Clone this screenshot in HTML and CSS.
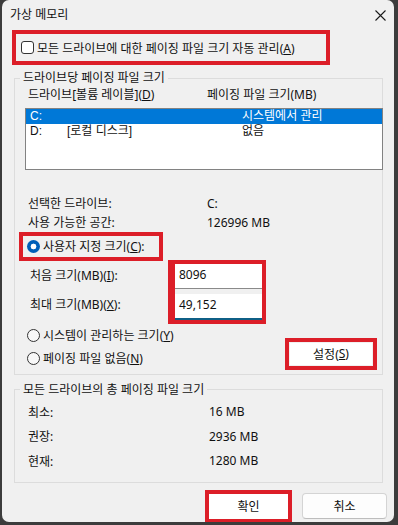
FILE: index.html
```html
<!DOCTYPE html>
<html lang="ko">
<head>
<meta charset="utf-8">
<title>가상 메모리</title>
<link rel="stylesheet" href="styles.css">
</head>
<body>
<div class="window">
  <div class="titlebar">
    <span class="title">가상 메모리</span>
    <svg class="close" width="11" height="11" viewBox="0 0 11 11"><path d="M0.5 0.5 L10.5 10.5 M10.5 0.5 L0.5 10.5" stroke="#1a1a1a" stroke-width="1.1" fill="none"/></svg>
  </div>
  <div class="main">
    <div class="hl hl-auto">
      <span class="check"></span>
      <span>모든 드라이브에 대한 페이징 파일 크기 자동 관리(<u>A</u>)</span>
    </div>

    <fieldset class="group g1">
      <legend>드라이브당 페이징 파일 크기</legend>
      <div class="cols">
        <span>드라이브[볼륨 레이블](<u>D</u>)</span>
        <span>페이징 파일 크기(MB)</span>
      </div>
      <div class="list">
        <div class="row sel"><span>C:</span><span></span><span>시스템에서 관리</span></div>
        <div class="row"><span>D:</span><span>[로컬 디스크]</span><span>없음</span></div>
      </div>
      <div class="info">
        <span>선택한 드라이브:</span><span>C:</span>
        <span>사용 가능한 공간:</span><span>126996 MB</span>
      </div>
      <div class="hl hl-radio">
        <span class="radio on"></span>
        <span>사용자 지정 크기(<u>C</u>):</span>
      </div>
      <div class="sizes">
        <div class="size-labels">
          <span>처음 크기(MB)(<u>I</u>):</span>
          <span class="second">최대 크기(MB)(<u>X</u>):</span>
        </div>
        <div class="hl hl-inputs">
          <div class="field f1">8096</div>
          <div class="field f2">49,152</div>
        </div>
      </div>
      <div class="bottom">
        <div class="radios">
          <div class="opt"><span class="radio"></span><span>시스템이 관리하는 크기(<u>Y</u>)</span></div>
          <div class="opt"><span class="radio"></span><span>페이징 파일 없음(<u>N</u>)</span></div>
        </div>
        <div class="hl hl-set">
          <div class="btn-set">설정(<u>S</u>)</div>
        </div>
      </div>
    </fieldset>

    <fieldset class="group g2">
      <legend>모든 드라이브의 총 페이징 파일 크기</legend>
      <div class="totals">
        <span>최소:</span><span>16 MB</span>
        <span>권장:</span><span>2936 MB</span>
        <span>현재:</span><span>1280 MB</span>
      </div>
    </fieldset>

    <div class="actions">
      <div class="hl hl-ok"><div class="btn-ok">확인</div></div>
      <div class="btn-cancel">취소</div>
    </div>
  </div>
</div>
</body>
</html>
```

FILE: styles.css
```css
* { box-sizing: border-box; }
html, body { margin: 0; padding: 0; }
body {
  background: #3c3c3c;
  width: 398px;
  height: 525px;
  overflow: hidden;
  font-family: "Noto Sans", "Noto Sans CJK KR", sans-serif;
  font-size: 12px;
  color: #111;
}
u { text-decoration: underline; text-underline-offset: 1px; }

.window {
  margin-left: 2px;
  width: 392px;
  height: 522px;
  background: #f0f0f0;
  border-radius: 7px;
  overflow: hidden;
  display: flex;
  flex-direction: column;
}
.titlebar {
  height: 30px;
  flex: none;
  display: flex;
  align-items: center;
  justify-content: space-between;
  padding: 0 8px 0 8px;
}
.title { line-height: 16px; }
.close { display: block; }

.main {
  padding: 0 11px 0 12px;
  display: flex;
  flex-direction: column;
}

.hl { border: 4px solid #dc1e28; }

.hl-auto {
  margin-left: -2px;
  width: 318px;
  height: 35px;
  display: flex;
  align-items: center;
  padding-left: 5px;
  gap: 3px;
}
.check {
  width: 13px;
  height: 13px;
  border: 1px solid #333;
  border-radius: 3px;
  background: #fff;
  flex: none;
}

.group {
  margin: 0;
  border: 1px solid #dcdcdc;
  min-width: 0;
}
.group legend {
  padding: 0 3px;
  margin-left: -8px;
  line-height: 16px;
}
.g1 {
  margin-top: 5px;
  padding: 1px 0 4px 13px;
}

.cols {
  display: grid;
  grid-template-columns: 179px 1fr;
  line-height: 16px;
}
.list {
  margin: 5px -1px 0 -3px;
  height: 62px;
  border: 1px solid #828282;
  background: #fff;
  font-family: "Liberation Sans", "Noto Sans CJK KR", sans-serif;
}
.row {
  display: grid;
  grid-template-columns: 37px 175px 1fr;
  height: 15px;
  line-height: 15px;
  padding-left: 4px;
}
.row.sel { background: #0078d7; color: #fff; }

.info {
  margin-top: 23.5px;
  display: grid;
  grid-template-columns: 179px 1fr;
  line-height: 19px;
}

.hl-radio {
  margin-left: -9px;
  width: 144px;
  height: 29px;
  display: flex;
  align-items: center;
  padding-left: 4px;
  gap: 3px;
}
.radio {
  width: 13px;
  height: 13px;
  border: 1px solid #333;
  border-radius: 50%;
  background: #f8f8f8;
  flex: none;
}
.radio.on {
  border: none;
  background: radial-gradient(circle, #fff 0 2.6px, #005fb8 3.2px);
}

.sizes {
  margin-top: -1px;
  display: grid;
  grid-template-columns: 140px auto;
}
.size-labels {
  display: flex;
  flex-direction: column;
  padding: 8px 0 0 2px;
  line-height: 16px;
}
.size-labels .second { margin-top: 13px; }
.hl-inputs {
  width: 98px;
  border-left-width: 7px;
  display: flex;
  flex-direction: column;
  gap: 5px;
}
.field {
  background: #fff;
  padding-left: 4px;
  display: flex;
  align-items: center;
}
.f1 { height: 25px; border-bottom: 1px solid #8a8a8a; padding-bottom: 3px; }
.f2 { height: 26px; border-bottom: 2px solid #0f5f86; padding-bottom: 2px; }

.bottom {
  display: flex;
  justify-content: space-between;
  align-items: flex-end;
  padding-right: 5px;
}
.radios { margin-left: -1px; display: flex; flex-direction: column; }
.opt {
  height: 23px;
  display: flex;
  align-items: center;
  gap: 3px;
}
.hl-set {
  width: 92px;
  height: 32px;
  padding: 1px;
}
.btn-set {
  height: 100%;
  background: #fff;
  display: flex;
  align-items: center;
  justify-content: center;
}

.g2 {
  margin-top: 7px;
  padding: 2px 0 9px 13px;
}
.totals {
  display: grid;
  grid-template-columns: 181px 1fr;
  grid-auto-rows: 24.5px;
  align-items: center;
}

.actions {
  margin: 6.5px -4px 0 0;
  display: flex;
  justify-content: flex-end;
  align-items: center;
  gap: 10px;
}
.hl-ok {
  width: 87px;
  height: 33px;
}
.btn-ok {
  height: 100%;
  background: #fff;
  display: flex;
  align-items: center;
  justify-content: center;
}
.btn-cancel {
  width: 85px;
  height: 26px;
  background: #fdfdfd;
  border: 1px solid #d4d4d4;
  border-bottom-color: #bdbdbd;
  border-radius: 4px;
  display: flex;
  align-items: center;
  justify-content: center;
}
```
